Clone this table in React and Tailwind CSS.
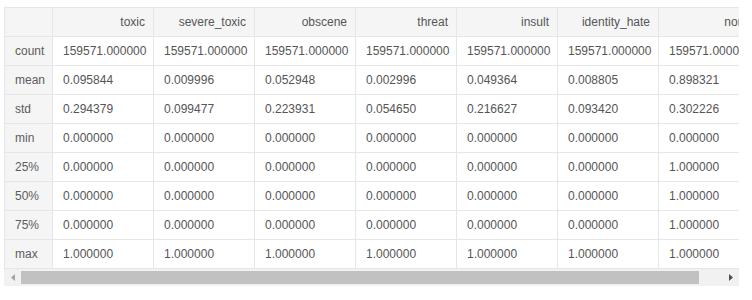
import React from "react";

const cols = ["toxic", "severe_toxic", "obscene", "threat", "insult", "identity_hate", "none"];
const rows = [
  ["count", ["159571.000000", "159571.000000", "159571.000000", "159571.000000", "159571.000000", "159571.000000", "159571.000000"]],
  ["mean", ["0.095844", "0.009996", "0.052948", "0.002996", "0.049364", "0.008805", "0.898321"]],
  ["std", ["0.294379", "0.099477", "0.223931", "0.054650", "0.216627", "0.093420", "0.302226"]],
  ["min", ["0.000000", "0.000000", "0.000000", "0.000000", "0.000000", "0.000000", "0.000000"]],
  ["25%", ["0.000000", "0.000000", "0.000000", "0.000000", "0.000000", "0.000000", "1.000000"]],
  ["50%", ["0.000000", "0.000000", "0.000000", "0.000000", "0.000000", "0.000000", "1.000000"]],
  ["75%", ["0.000000", "0.000000", "0.000000", "0.000000", "0.000000", "0.000000", "1.000000"]],
  ["max", ["1.000000", "1.000000", "1.000000", "1.000000", "1.000000", "1.000000", "1.000000"]],
];

export default function App() {
  return (
    <div className="w-[752px] h-[300px] bg-white pt-[7px] pl-[4px]" style={{ fontFamily: '"Liberation Sans", Arial, sans-serif' }}>
      <div className="w-[735px]">
        <div className="w-[735px] overflow-hidden">
          <table className="border-collapse text-[12px] text-[#555] table-fixed w-[753px]">
            <colgroup>
              <col className="w-[48px]" />
              {cols.map((c) => (
                <col key={c} className="w-[101px]" />
              ))}
            </colgroup>
            <thead>
              <tr className="h-[29px] bg-[#f5f5f5]">
                <th className="border border-[#e6e6e6] font-normal"></th>
                {cols.map((c) => (
                  <th key={c} className="border border-[#e6e6e6] font-normal text-right pr-[8px] whitespace-nowrap overflow-hidden">
                    {c}
                  </th>
                ))}
              </tr>
            </thead>
            <tbody>
              {rows.map(([label, vals]) => (
                <tr key={label} className="h-[29px]">
                  <td className="border border-[#e6e6e6] bg-[#f5f5f5] pl-[10px] text-[#5c5c5c]">{label}</td>
                  {vals.map((v, i) => (
                    <td key={i} className="border border-[#e6e6e6] pl-[10px] whitespace-nowrap overflow-hidden">
                      {v}
                    </td>
                  ))}
                </tr>
              ))}
            </tbody>
          </table>
        </div>
        <div className="h-[17px] bg-[#f1f1f1] flex items-center">
          <div className="w-[17px] h-[17px] flex items-center justify-center">
            <svg width="4" height="7" viewBox="0 0 4 7">
              <polygon points="4,0 4,7 0,3.5" fill="#a3a3a3" />
            </svg>
          </div>
          <div className="h-[13px] w-[678px] bg-[#c1c1c1]"></div>
          <div className="flex-1 h-[17px] flex items-center justify-end pr-[6px]">
            <svg width="4" height="7" viewBox="0 0 4 7">
              <polygon points="0,0 0,7 4,3.5" fill="#505050" />
            </svg>
          </div>
        </div>
      </div>
    </div>
  );
}
